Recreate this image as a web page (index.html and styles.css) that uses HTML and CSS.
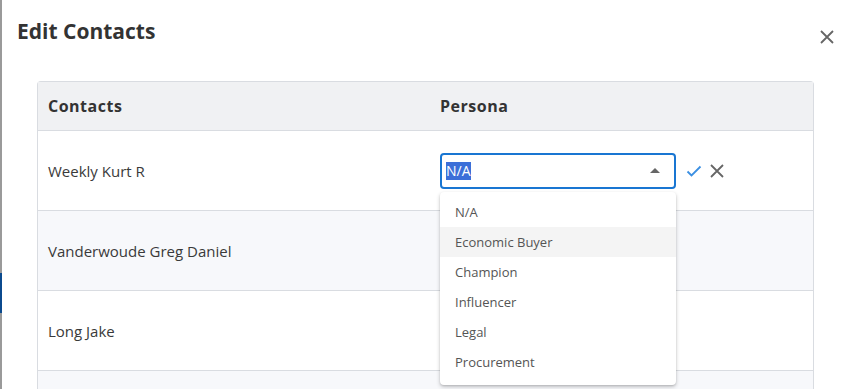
FILE: index.html
```html
<!DOCTYPE html>
<html lang="en">
<head>
    <meta charset="UTF-8">
    <title>Edit Contacts</title>
    <link rel="stylesheet" href="styles.css">
</head>
<body>
    <div class="page">
        <!--뒤쪽 화면 가장자리-->
        <div class="edge">
            <span class="edge-mark"></span>
        </div>

        <div class="modal">
            <div class="modal-head">
                <h2 class="modal-title">Edit Contacts</h2>
                <button class="close-btn" type="button" aria-label="close">
                    <svg viewBox="0 0 14 14" width="14" height="14">
                        <path d="M1 1 L13 13 M13 1 L1 13" />
                    </svg>
                </button>
            </div>

            <div class="table-box">
                <table class="contacts">
                    <thead>
                        <tr>
                            <th class="col-name">Contacts</th>
                            <th>Persona</th>
                        </tr>
                    </thead>
                    <tbody>
                        <tr>
                            <td>Weekly Kurt R</td>
                            <td>
                                <div class="edit-cell">
                                    <div class="select">
                                        <span class="select-value">N/A</span>
                                        <span class="caret"></span>
                                        <!--펼쳐진 목록-->
                                        <ul class="menu">
                                            <li>N/A</li>
                                            <li class="hover">Economic Buyer</li>
                                            <li>Champion</li>
                                            <li>Influencer</li>
                                            <li>Legal</li>
                                            <li>Procurement</li>
                                        </ul>
                                    </div>
                                    <button class="icon-btn ok" type="button" aria-label="save">
                                        <svg viewBox="0 0 16 12" width="16" height="12">
                                            <path d="M1.5 6.5 L5.5 10.5 L14.5 1.5" />
                                        </svg>
                                    </button>
                                    <button class="icon-btn cancel" type="button" aria-label="cancel">
                                        <svg viewBox="0 0 14 14" width="14" height="14">
                                            <path d="M1 1 L13 13 M13 1 L1 13" />
                                        </svg>
                                    </button>
                                </div>
                            </td>
                        </tr>
                        <tr>
                            <td>Vanderwoude Greg Daniel</td>
                            <td></td>
                        </tr>
                        <tr>
                            <td>Long Jake</td>
                            <td></td>
                        </tr>
                        <tr>
                            <td>&nbsp;</td>
                            <td></td>
                        </tr>
                    </tbody>
                </table>
            </div>
        </div>
    </div>
</body>
</html>
```

FILE: styles.css
```css
html,
body {
    margin: 0;
    padding: 0;
    width: 100%;
    height: 100%;
    overflow: hidden;
}

body {
    font-family: "Open Sans", "Noto Sans", sans-serif;
    color: #333;
    background: #fff;
}

.page {
    display: flex;
    height: 100%;
}

/*왼쪽 가장자리*/
.edge {
    width: 2px;
    background: #9a9a9a;
    padding-top: 273px;
    flex-shrink: 0;
}

.edge-mark {
    display: block;
    height: 40px;
    background: #0b4a8e;
}

.modal {
    flex: 1;
    padding: 14px 0 0 15px;
    overflow: hidden;
}

.modal-head {
    display: flex;
    justify-content: space-between;
    align-items: flex-start;
}

.modal-title {
    margin: 0;
    font-size: 21px;
    line-height: 34px;
    font-weight: 700;
    color: #333;
}

.close-btn {
    border: 0;
    background: none;
    padding: 0;
    margin: 16px 19px 0 0;
    width: 14px;
    height: 14px;
    display: flex;
    cursor: pointer;
}

.close-btn path,
.cancel path {
    stroke: #666;
    stroke-width: 1.8;
    fill: none;
}

/*테이블 박스*/
.table-box {
    margin: 33px 39px 0 20px;
    border: 1px solid #d9dce1;
    border-bottom: 0;
    border-radius: 4px 4px 0 0;
}

.contacts {
    width: 100%;
    border-collapse: collapse;
    font-size: 15px;
}

.contacts th {
    text-align: left;
    font-weight: 700;
    font-size: 16px;
    letter-spacing: 0.5px;
    height: 48px;
    padding: 0 10px;
    background: #f0f1f3;
    border-bottom: 1px solid #d9dce1;
    color: #333;
}

.contacts th.col-name {
    width: 372px;
}

.contacts td {
    height: 79px;
    padding: 0 10px;
    border-bottom: 1px solid #d9dce1;
    color: #3a3a3a;
}

.contacts tbody tr:nth-child(even) td {
    background: #f7f8fb;
}

/*편집 셀*/
.edit-cell {
    display: flex;
    align-items: center;
    gap: 8px;
}

.select {
    position: relative;
    width: 214px;
    height: 32px;
    border: 2px solid #1976d2;
    border-radius: 4px;
    display: flex;
    align-items: center;
    padding: 0 14px 0 4px;
    box-sizing: content-box;
}

.select-value {
    font-size: 14px;
    line-height: 18px;
    background: #3c6fd8;
    color: #fff;
    margin-right: auto;
}

.caret {
    width: 0;
    height: 0;
    border-left: 5px solid transparent;
    border-right: 5px solid transparent;
    border-bottom: 5px solid #666;
}

/*펼쳐진 목록*/
.menu {
    position: absolute;
    top: 37px;
    left: -2px;
    width: 236px;
    margin: 0;
    padding: 5px 0 8px;
    list-style: none;
    background: #fff;
    border-radius: 4px;
    box-shadow: 0 2px 4px rgba(0, 0, 0, .2), 0 1px 2px rgba(0, 0, 0, .12);
    z-index: 2;
}

.menu li {
    height: 30px;
    line-height: 30px;
    padding: 0 15px;
    font-size: 13px;
    color: #555;
}

.menu li.hover {
    background: #f4f4f4;
}

.icon-btn {
    border: 0;
    background: none;
    padding: 0;
    display: flex;
    cursor: pointer;
}

.ok {
    margin-left: 2px;
}

.ok path {
    stroke: #3b8fe2;
    stroke-width: 1.8;
    fill: none;
}
```
